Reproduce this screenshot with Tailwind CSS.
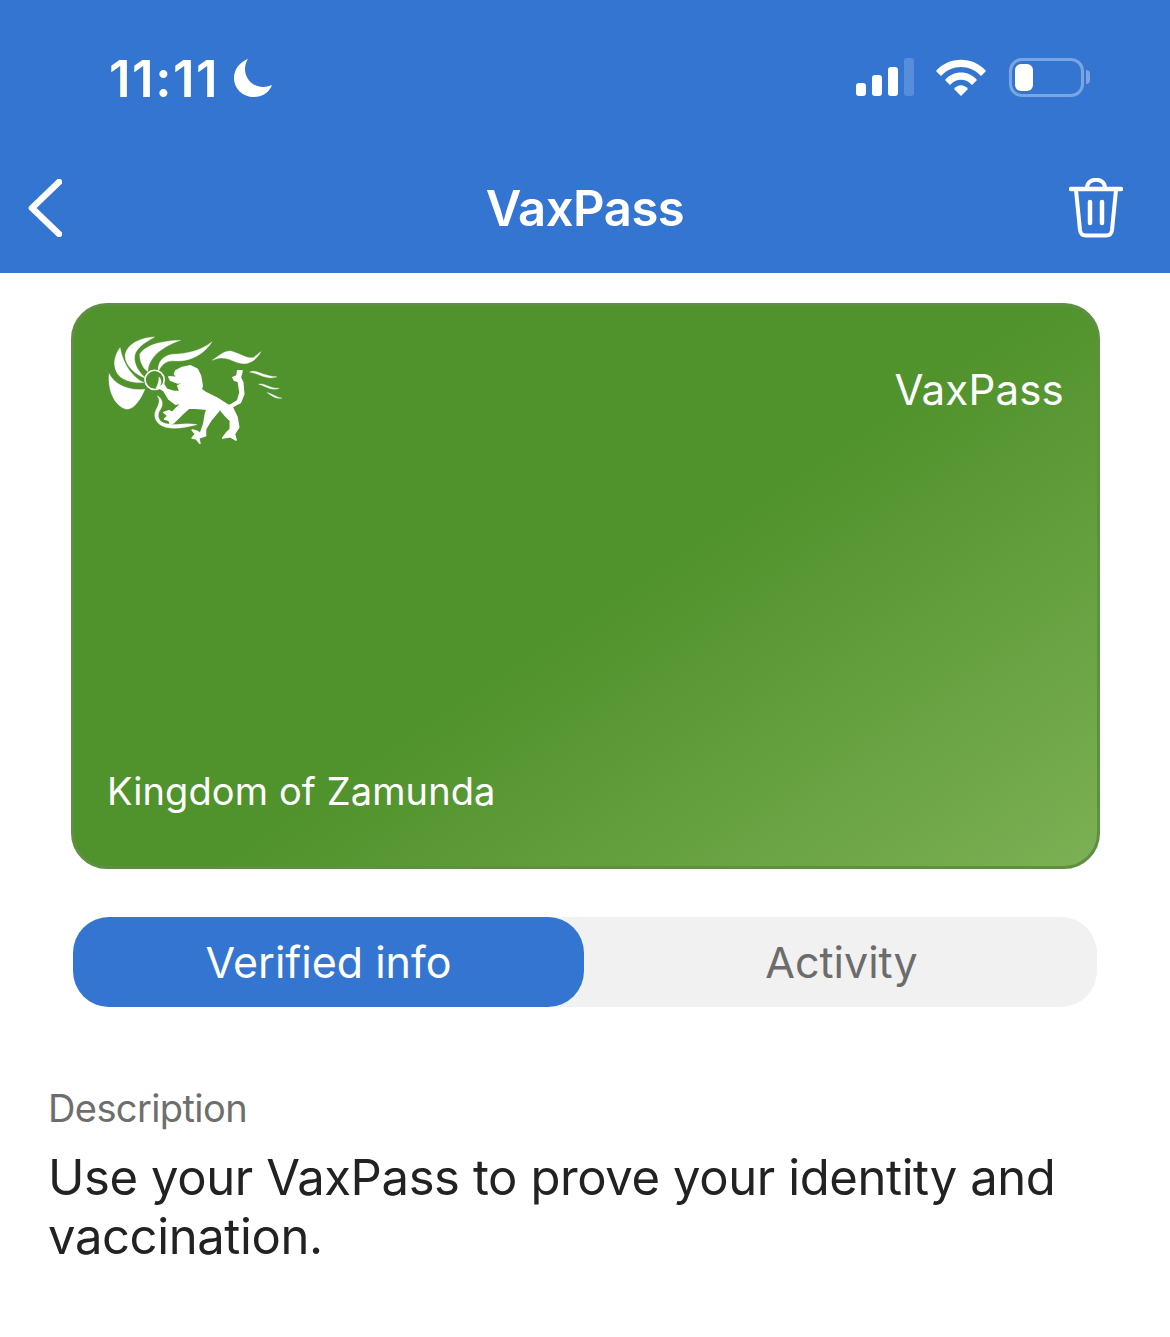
<!DOCTYPE html>
<html lang="en">
<head>
  <meta charset="UTF-8">
  <title>VaxPass</title>
  <script src="https://cdn.jsdelivr.net/npm/@tailwindcss/browser@4"></script>
</head>
<body class="bg-white font-['Inter',sans-serif] w-[1170px] h-[1337px] overflow-hidden">
  <!-- blue header: status bar + nav -->
  <header class="bg-[#3375d1] h-[273px] text-white flex flex-col">
    <div class="flex items-center justify-between h-[156px] pl-[109px] pr-[80px]">
      <div class="flex items-center gap-[14px]">
        <span class="text-[51px] leading-none font-semibold tracking-[1.500px]">11:11</span>
        <svg width="40" height="42" viewBox="0 0 40 40"><path d="M15 1 C7 4 1 11 1 20 C1 31 10 39 21 39 C29 39 36 35 39 27 C36 28 33 29 30 29 C20 29 12 21 12 11 C12 7 13 4 15 1Z" fill="#fff"/></svg>
      </div>
      <div class="flex items-center gap-[22px] mb-[2px]">
        <svg width="59" height="38" viewBox="0 0 59 38">
          <rect x="1" y="25" width="10" height="13" rx="3" fill="#fff"/>
          <rect x="17" y="17" width="10" height="21" rx="3" fill="#fff"/>
          <rect x="33" y="9" width="10" height="29" rx="3" fill="#fff"/>
          <rect x="49" y="0" width="10" height="38" rx="3" fill="#ffffff" fill-opacity="0.18"/>
        </svg>
        <svg width="50" height="38" viewBox="0 0 50 38" fill="#fff">
          <path d="M0 13 C13 -2 37 -2 50 13 L45 18 C34 6 16 6 5 18Z"/>
          <path d="M9 22 C17 12 33 12 41 22 L36 27 C30 20 20 20 14 27Z"/>
          <path d="M18 31 C22 26 28 26 32 31 L25 38Z"/>
        </svg>
        <div class="flex items-center gap-[2px] ml-[1px]">
          <div class="w-[75px] h-[39px] rounded-[13px] border-[3px] border-white/35 p-[3px]">
            <div class="w-[18px] h-full rounded-[6px] bg-white"></div>
          </div>
          <div class="w-[4px] h-[14px] rounded-r-full bg-white/35"></div>
        </div>
      </div>
    </div>
    <div class="grid grid-cols-[1fr_auto_1fr] items-center h-[104px] pl-[28px] pr-[47px]">
      <svg width="34" height="58" viewBox="0 0 34 58" fill="none"><path d="M31 3 L4 29 L31 55" stroke="#fff" stroke-width="6.500" stroke-linecap="round" stroke-linejoin="round"/></svg>
      <h1 class="text-[49px] leading-none font-semibold tracking-[-0.5px] ml-[19px]">VaxPass</h1>
      <svg class="justify-self-end" width="54" height="60" viewBox="0 0 54 60" fill="none" stroke="#fff" stroke-linecap="round" stroke-linejoin="round">
        <path d="M2 11 H52" stroke-width="4.5"/>
        <path d="M18 10 C18 -1 36 -1 36 10" stroke-width="4"/>
        <path d="M7 12 L11 52 C11.500 56 13 57.500 17 57.500 H37 C41 57.500 42.500 56 43 52 L47 12" stroke-width="4"/>
        <path d="M21 24 V45 M33 24 V45" stroke-width="4.500"/>
      </svg>
    </div>
  </header>

  <main class="flex flex-col">
    <!-- card -->
    <section class="mt-[30px] ml-[71px] w-[1029px] h-[566px] rounded-[36px] border-[3px] border-[#5f8f43] bg-[linear-gradient(146deg,#50922c_0%,#50922c_52%,#7cb054_100%)] text-white flex flex-col justify-between pl-[33px] pr-[33px] pb-[56px] pt-[30px]">
      <div class="flex justify-between">
        <svg class="w-[177px] h-[108px]" viewBox="50 45 530 325" fill="#fff" stroke="#fff" stroke-width="1" stroke-linejoin="round">
          <path d="M55 158 C70 190 115 212 163 205 C150 235 130 268 105 265 C72 255 50 210 55 158Z"/>
          <path d="M88 80 C62 115 68 155 95 172 C115 184 140 186 160 185 C130 172 98 135 88 80Z"/>
          <path d="M192 48 C145 50 106 72 103 105 C104 135 135 162 165 172 C140 150 124 120 135 95 C145 75 170 60 192 48Z"/>
          <path d="M270 58 C220 60 168 68 147 100 C147 125 160 146 172 152 C172 120 200 82 270 58Z"/>
          <path d="M365 62 C330 90 290 98 245 100 C215 105 200 125 203 152 C212 132 228 118 250 120 C300 124 340 100 365 62Z"/>
          <circle cx="192" cy="177" r="29" fill="#50922c" stroke-width="5"/>
          <path d="M205 168 C213 175 214 190 206 200 L196 203 C202 192 205 180 205 168Z"/>
          <path d="M365 118 C385 105 400 90 420 90 C445 95 470 115 490 110 L512 92 C500 115 480 130 455 128 C425 125 410 100 365 118Z"/>
          <path d="M478 153 C500 145 515 165 560 168 C530 178 510 160 478 153Z"/>
          <path d="M505 190 C525 185 540 205 567 202 C545 212 525 195 505 190Z"/>
          <path d="M530 215 C545 218 560 230 575 232 C555 235 545 225 530 215Z"/>
          <path stroke-width="5" d="M255 150 L275 140 L300 135 L320 145 L330 165 L335 195 L332 206 L345 215 L380 232 L415 255 L425 250 L442 240 L449 215 L444 182 L432 178 L428 170 L440 165 L442 150 L455 150 L450 170 L457 185 L460 220 L450 245 L425 258 L440 290 L445 320 L432 340 L437 358 L420 348 L397 352 L410 335 L420 325 L420 300 L405 285 L380 255 L385 270 L360 300 L345 325 L345 345 L325 352 L328 368 L318 355 L305 352 L315 340 L305 328 L320 332 L330 338 L340 310 L345 280 L350 265 L315 262 L295 262 L275 280 L250 305 L240 310 L235 298 L222 295 L232 285 L220 275 L235 270 L245 275 L265 255 L275 245 L255 250 L235 235 L220 210 L205 200 L220 192 L228 205 L250 212 L268 212 L262 195 L272 190 L280 183 L262 186 L240 178 L235 168 L262 170 L252 160Z"/>
          <path d="M200 225 C215 232 220 250 210 265 C195 285 205 310 235 310 C260 315 290 305 320 312 C290 318 265 325 240 322 C205 320 185 295 195 270 C205 250 210 240 200 225Z"/>
        </svg>
        <span class="text-[42px] leading-none mt-[33px] tracking-[0.2px]">VaxPass</span>
      </div>
      <span class="text-[38px] leading-none tracking-[0.1px]">Kingdom of Zamunda</span>
    </section>

    <!-- tabs -->
    <div class="mt-[48px] ml-[73px] w-[1024px] h-[90px] rounded-[36px] bg-[#f1f1f1] flex text-[43px]">
      <div class="w-[511px] rounded-[36px] bg-[#3375d1] text-white flex items-center justify-center">Verified info</div>
      <div class="flex-1 text-[#6c6c6c] flex items-center justify-center pl-[2px]">Activity</div>
    </div>

    <!-- description -->
    <section class="mt-[79px] ml-[48px] w-[1060px]">
      <p class="text-[38px] leading-[44px] text-[#6e6e6e] tracking-[-0.6px]">Description</p>
      <p class="mt-[18px] text-[49px] leading-[59px] text-[#222] tracking-[-0.4px]">Use your VaxPass to prove your identity and vaccination.</p>
    </section>
  </main>
</body>
</html>
